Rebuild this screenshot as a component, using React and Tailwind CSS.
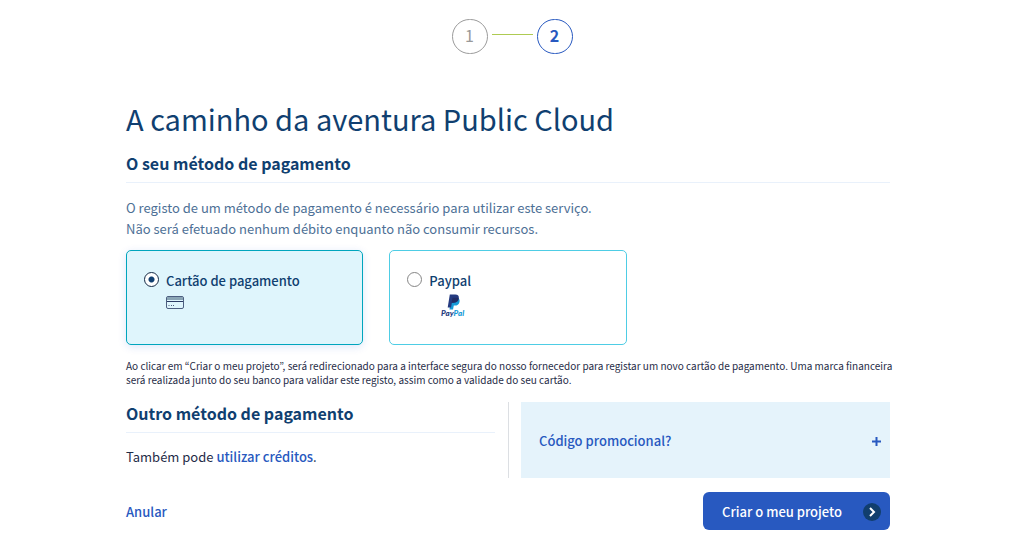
import React, { useState } from "react";

function CardIcon() {
  return (
    <svg viewBox="0 0 18 13" className="block h-[13px] w-[18px]" aria-hidden="true">
      <rect x="0.5" y="0.5" width="17" height="12" rx="1.5" fill="#dff5fc" stroke="#4d5f80" />
      <path d="M1 1h16v3H1z" fill="#8aa5b5" />
      <path d="M1 5.5h16" stroke="#2c3c66" />
      <path d="M2.5 9.5h1M5 9.5h1M7 9.5h1" stroke="#4d5f80" />
    </svg>
  );
}

function PaypalIcon() {
  return (
    <svg viewBox="0 0 24 24" className="block h-6 w-6 overflow-visible" role="img" aria-label="PayPal">
      <path d="M9.6 4h6.3c2 .6 2.6 2 2.1 4-.6 2.6-2.3 3.6-4.6 3.6h-1.1l-.8 4H8z" transform="translate(.5 0)" fill="#179bd7" />
      <path d="M8.3.5h5.5c2.600 0 4 1.500 3.500 4-.5 2.900-2.500 4.200-5.200 4.200h-1.700L9.500 13.500H6.200z" transform="translate(.5 0)" fill="#253b80" />
      <path d="M10.900 4.200c0-.4.300-.5.700-.5h3.600c.8 0 1.400.1 2 .4-.3 3-2.100 4.600-5.100 4.600h-2z" transform="translate(.5 0)" fill="#222d65" />
      <text x="0" y="22" fontFamily="Lato, sans-serif" fontSize="8" fontStyle="italic" fontWeight="900" fill="#253b80">
        Pay<tspan fill="#179bd7">Pal</tspan>
      </text>
    </svg>
  );
}

function PaymentOption({ value, label, selected, onSelect, children }) {
  const checked = selected === value;
  return (
    <label
      className={
        "flex h-[95px] cursor-pointer items-start rounded-[5px] border px-[17px] pt-5 " +
        (checked
          ? "border-[#00a5bd] bg-[#dff5fc] shadow-[0_2px_8px_rgba(0,80,215,0.14)]"
          : "border-[#4ecde5] bg-white")
      }
    >
      <input
        type="radio"
        name="payment"
        value={value}
        checked={checked}
        onChange={() => onSelect(value)}
        className="mt-px size-[15px] shrink-0 appearance-none rounded-full border border-[#858585] bg-white checked:border-[#122844] checked:bg-[radial-gradient(circle,#103f70_0_2.5px,white_3.5px)]"
      />
      <span className="ml-[7px] flex flex-col items-start">
        <span className="text-[13px] leading-5 font-medium">{label}</span>
        {children}
      </span>
    </label>
  );
}

export default function App() {
  const [selected, setSelected] = useState("card");
  return (
    <main className="bg-white pt-[19px] pr-[123px] pb-3.5 pl-[126px] font-['Noto_Sans_CJK_KR',sans-serif] text-[#103f70]">
      <ol className="ml-2 flex items-center justify-center gap-1">
        <li className="flex h-[35px] w-9 items-center justify-center rounded-full border border-[#9b9b9b] pb-1 text-base leading-6 text-[#999999]">1</li>
        <li aria-hidden="true" className="mb-1 h-px w-[41px] bg-[#aecb52]" />
        <li aria-current="step" className="flex h-[35px] w-9 items-center justify-center rounded-full border border-[#2859c0] pb-1 text-base leading-6 font-bold text-[#2859c0]">2</li>
      </ol>

      <h1 className="mt-10 pb-0.5 text-[29px] leading-[48px] font-normal">A caminho da aventura Public Cloud</h1>
      <h2 className="border-b border-[#e9f1fb] pt-1.5 pb-1.5 text-base leading-[26px] font-bold">O seu método de pagamento</h2>

      <p className="mt-3.5 text-[13px] leading-[21px] text-[#4d7096]">
        O registo de um método de pagamento é necessário para utilizar este serviço.
        <br />
        Não será efetuado nenhum débito enquanto não consumir recursos.
      </p>

      <div className="mt-[11px] grid grid-cols-3 gap-[26px]">
        <PaymentOption value="card" label="Cartão de pagamento" selected={selected} onSelect={setSelected}>
          <span className="mt-[5px]"><CardIcon /></span>
        </PaymentOption>
        <PaymentOption value="paypal" label="Paypal" selected={selected} onSelect={setSelected}>
          <span className="mt-[3px] ml-3"><PaypalIcon /></span>
        </PaymentOption>
      </div>

      <p className="mt-3.5 -mr-2 text-[10px] leading-[14px] text-[#1f2c47]">
        Ao clicar em “Criar o meu projeto”, será redirecionado para a interface segura do nosso fornecedor para registar um novo cartão de pagamento. Uma marca financeira será realizada junto do seu banco para validar este registo, assim como a validade do seu cartão.
      </p>

      <div className="mt-[15px] flex min-h-[76px]">
        <section className="flex-1 pr-[13px]">
          <h2 className="border-b border-[#e9f1fb] pb-2 text-base leading-[22px] font-bold">Outro método de pagamento</h2>
          <p className="mt-3.5 text-[13px] leading-5 text-[#1f2c47]">
            Também pode <a href="#creditos" className="font-medium text-[#2859c0]">utilizar créditos</a>.
          </p>
        </section>
        <div className="flex flex-1 border-l border-[#dcdfe3] pl-3">
          <button type="button" aria-expanded="false" className="flex flex-1 items-center justify-between bg-[#e5f3fb] pt-0.5 pr-2 pl-[18px] text-[13px] leading-5 font-medium text-[#2859c0]">
            Código promocional?
            <svg viewBox="0 0 11 11" className="size-[11px]" aria-hidden="true">
              <path d="M5.5 1v9M1 5.5h9" stroke="#2859c0" strokeWidth="2" />
            </svg>
          </button>
        </div>
      </div>

      <div className="mt-3.5 flex items-center justify-between">
        <a href="#anular" className="pt-0.5 text-[13px] leading-5 font-medium text-[#2859c0]">Anular</a>
        <button type="button" className="flex h-[38px] items-center gap-[21px] rounded-md bg-[#2859c0] pt-0.5 pr-[9px] pl-[19px] text-[13px] leading-5 font-medium text-white">
          Criar o meu projeto
          <svg viewBox="0 0 18 18" className="size-[18px]" aria-hidden="true">
            <circle cx="9" cy="9" r="9" fill="#113e6d" />
            <path d="M7 5l4 4-4 4" fill="none" stroke="white" strokeWidth="2" />
          </svg>
        </button>
      </div>
    </main>
  );
}
